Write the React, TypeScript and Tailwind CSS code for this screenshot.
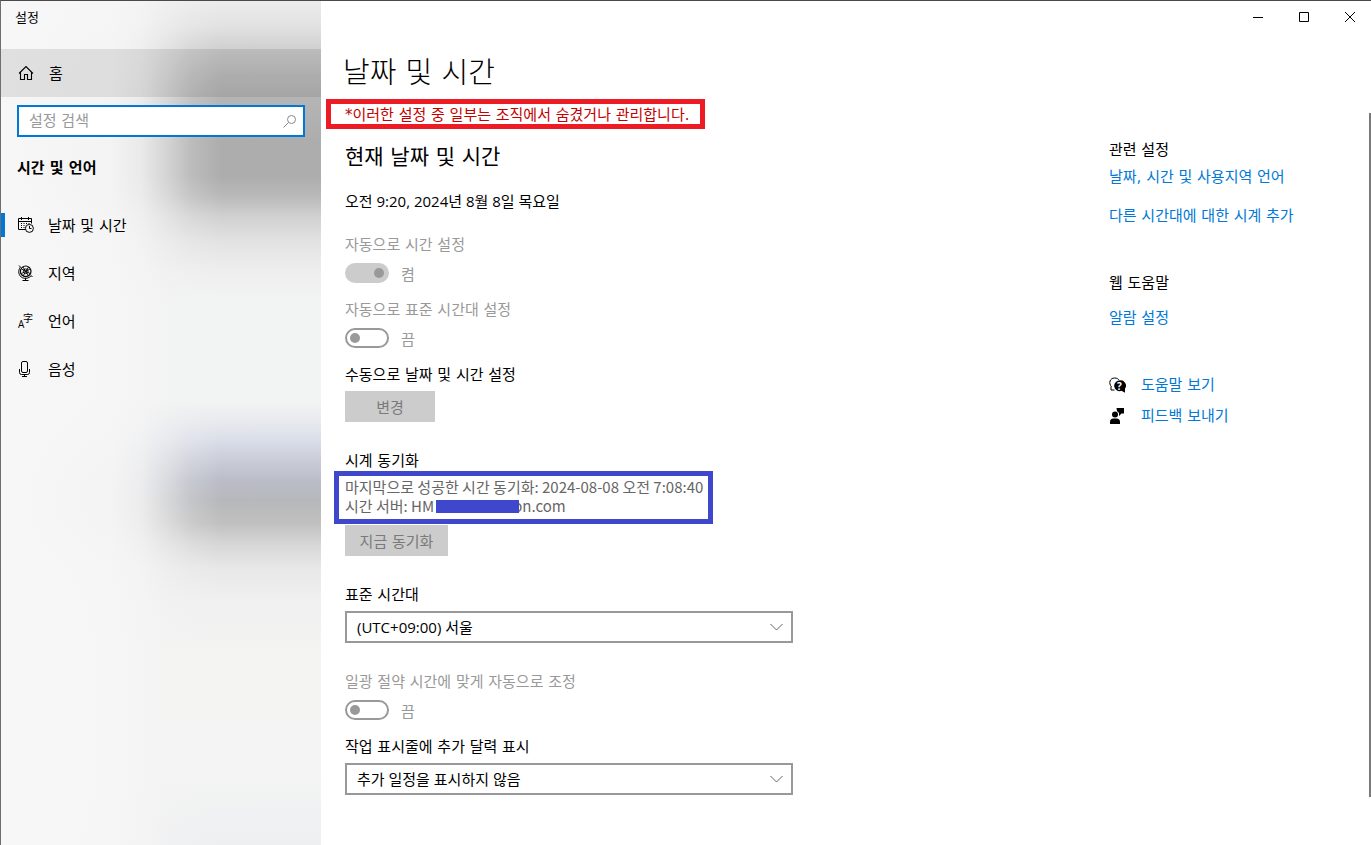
import type { ReactNode } from 'react'

const CalendarIcon = () => (
  <svg width="16" height="16" viewBox="0 0 16 16" fill="none" stroke="#000" aria-hidden="true">
    <path d="M7.5 12.5H.5v-11h13v5M.5 4.5h13M3.5 0v3M10.5 0v3" />
    <path d="M3 6.5h1M5.5 6.5h1M8 6.5h1M10.5 6.5h1M3 8.5h1M5.5 8.5h1M3 10.5h1M5.5 10.5h1" strokeWidth="1.2" />
    <circle cx="11.4" cy="11.4" r="4" />
    <path d="M11.5 8.8v2.7h2" />
  </svg>
)

const GlobeIcon = () => (
  <svg width="16" height="16" viewBox="0 0 16 16" fill="none" stroke="#000" aria-hidden="true">
    <circle cx="7.7" cy="6.3" r="5.3" strokeWidth="1.2" />
    <path d="M3.5 4L12 8.5M12 4L3.5 8.5M5 2l5.5 9M10.5 2L5 11" strokeWidth=".9" />
    <circle cx="7.7" cy="6.3" r="2.4" strokeWidth=".9" />
    <path d="M1 .5L2.5 2C-.5 5.500.5 11 4.5 12.800c3 1.200 6.500.5 8.500-2l1.500.7" />
    <path d="M7.5 13v2.500M4.500 15.500h6" />
  </svg>
)

const LanguageIcon = () => (
  <svg width="16" height="16" viewBox="0 0 16 16" className="overflow-visible" aria-hidden="true">
    <text x="0" y="15" fontSize="10" fontFamily="Open Sans, sans-serif">A</text>
    <text x="5" y="9" fontSize="10" fontFamily="Noto Sans CJK KR, sans-serif">字</text>
  </svg>
)

const MicIcon = () => (
  <svg width="16" height="16" viewBox="0 0 16 16" fill="none" stroke="#000" aria-hidden="true">
    <rect x="3.5" y=".5" width="6" height="11" rx="1.5" />
    <path d="M1.5 8v3.5q0 2 2 2h6q2 0 2-2V8M6.5 13.5v2M4 15.5h5" />
  </svg>
)

const HomeIcon = () => (
  <svg width="16" height="16" viewBox="0 0 16 16" fill="none" stroke="#000" strokeWidth="1.1" aria-hidden="true">
    <path d="M1 8.5l7-7 7 7M2.5 7.5v7h4v-5h3v5h4v-7" />
  </svg>
)

const SearchIcon = () => (
  <svg width="14" height="14" viewBox="0 0 14 14" fill="none" stroke="#888" aria-hidden="true">
    <circle cx="8.5" cy="5.5" r="4" />
    <path d="M5.5 8.5l-5 5" />
  </svg>
)

const HelpIcon = () => (
  <svg width="17" height="17" viewBox="0 0 17 17" aria-hidden="true">
    <path d="M2 10v3h3.5M2.500 10C-.8 6 1 1 5.500 1c2.500 0 4 1 4.800 2.500" fill="none" stroke="#000" />
    <path d="M10.5 3.500a5.300 5.300 0 1 0 2 10.200l3.500 2v-4a5.300 5.300 0 0 0-5.500-8.200z" />
    <text x="8" y="12.5" fontSize="10" fontWeight="700" fill="#fff" fontFamily="Open Sans, sans-serif">?</text>
  </svg>
)

const FeedbackIcon = () => (
  <svg width="17" height="17" viewBox="0 0 17 17" aria-hidden="true">
    <circle cx="6" cy="6.5" r="3" />
    <path d="M1 16v-2q0-3.500 3.500-3.500h3Q11 10.500 11 14v2zM7.500 0H15v5.500h-2.500L10 8V5L8 3z" />
  </svg>
)

const navItems = [
  { label: '날짜 및 시간', icon: CalendarIcon, active: true },
  { label: '지역', icon: GlobeIcon, active: false },
  { label: '언어', icon: LanguageIcon, active: false },
  { label: '음성', icon: MicIcon, active: false },
]

function Toggle({ id, label, on }: { id: string; label: string; on: boolean }) {
  return (
    <div className="mb-4 text-[#999]">
      <label htmlFor={id} className="mb-2 block pt-px">{label}</label>
      <div className="flex h-5 items-center gap-3">
        <input
          id={id}
          type="checkbox"
          role="switch"
          disabled
          defaultChecked={on}
          className="flex h-5 w-11 appearance-none items-center rounded-full border-2 border-[#999] px-[3px] before:size-2.5 before:rounded-full before:bg-[#999] checked:justify-end checked:border-[#ccc] checked:bg-[#ccc]"
        />
        <span className="pt-1">{on ? '켬' : '끔'}</span>
      </div>
    </div>
  )
}

function Dropdown({ id, label, value }: { id: string; label: string; value: string }) {
  return (
    <div>
      <label htmlFor={id} className="mb-1.5 block pt-px">{label}</label>
      <div className="relative w-full max-w-[448px]">
        <select
          id={id}
          className="block h-8 w-full appearance-none border-2 border-[#999] bg-white pl-2.5 font-['Open_Sans','Noto_Sans_CJK_KR',sans-serif]"
        >
          <option>{value}</option>
        </select>
        <svg className="pointer-events-none absolute top-3 right-2.5" width="13" height="8" viewBox="0 0 13 8" fill="none" stroke="#666">
          <path d="M.5 1l6 6 6-6" />
        </svg>
      </div>
    </div>
  )
}

function SideLink({ children }: { children: ReactNode }) {
  return <a href="#" className="block text-[#0078d7]">{children}</a>
}

export default function App() {
  return (
    <div className="relative flex min-h-screen border-t border-l border-t-[#4a484a] border-l-[#6e6e6e] bg-white font-['DejaVu_Sans','Noto_Sans_CJK_KR',sans-serif] text-[15px] leading-5 text-black">
      <aside className="w-80 shrink-0 bg-[linear-gradient(90deg,#f7f7f7_0,#f6f6f6f5_110px,#f5f5f5d8_140px,#f3f3f390_165px,#f3f3f338_190px,#f3f3f300_220px),linear-gradient(180deg,#ececec_0,#e2e2e2_25px,#cecece_50px,#bfbfbf_75px,#b5b5b5_97px,#adadad_140px,#adadad_175px,#b9b9b9_195px,#d0d0d0_215px,#e2e2e2_240px,#eeeeee_270px,#f2f3f3_300px,#f2f3f3_400px,#e8eaee_420px,#dbdfe9_438px,#cbced9_458px,#babdc7_480px,#b6b8bb_500px,#c0c0c0_522px,#d8d8d8_545px,#e8e8e8_568px,#f0f0f0_600px,#f4f4f3_660px,#f3f4f3_770px,#eeeff1_845px)]">
        <div className="flex h-12 items-start px-3.5 pt-[7px] text-[13px]">설정</div>
        <a href="#" className="flex h-12 items-center gap-[15px] bg-black/9 px-[17px]">
          <HomeIcon />
          <span className="pt-0.5">홈</span>
        </a>
        <div className="mx-4 mt-2 flex h-8 items-center border-2 border-[#0078d7] bg-white pr-1.5">
          <input
            type="text"
            aria-label="설정 검색"
            placeholder="설정 검색"
            className="h-full min-w-0 flex-1 px-2.5 outline-none placeholder:text-[#999]"
          />
          <SearchIcon />
        </div>
        <h2 className="mt-[21px] px-4 font-bold">시간 및 언어</h2>
        <nav className="mt-[23px]">
          {navItems.map((item) => (
            <a key={item.label} href="#" className="flex h-12 items-center">
              <span className={item.active ? 'h-6 w-1 bg-[#0078d7]' : 'h-6 w-1'} />
              <span className="mr-3.5 ml-[13px]">
                <item.icon />
              </span>
              <span className="pt-0.5">{item.label}</span>
            </a>
          ))}
        </nav>
      </aside>

      <div className="flex min-w-0 flex-1 flex-col">
        <header className="flex h-8 justify-end gap-1.5 pr-px">
          <button type="button" aria-label="최소화" className="flex w-10 items-center justify-center">
            <svg width="10" height="10" viewBox="0 0 10 10" stroke="#000"><path d="M0 5.5h10" /></svg>
          </button>
          <button type="button" aria-label="최대화" className="flex w-10 items-center justify-center">
            <svg width="10" height="10" viewBox="0 0 10 10" fill="none" stroke="#000"><path d="M.5.5h9v9h-9z" /></svg>
          </button>
          <button type="button" aria-label="닫기" className="flex w-10 items-center justify-center">
            <svg width="10" height="10" viewBox="0 0 10 10" stroke="#000"><path d="M0 0l10 10M10 0L0 10" /></svg>
          </button>
        </header>

        <div className="flex flex-1 pl-6">
          <main className="min-w-0 flex-1 pt-5 pb-12">
            <h1 className="-ml-0.5 text-[29px] leading-10 font-light">날짜 및 시간</h1>
            <p className="mt-1.5 -ml-[19px] h-[30px] w-[379px] border-5 border-[#ed1c24] pt-px pl-3.5 text-[#c50000]">
              *이러한 설정 중 일부는 조직에서 숨겼거나 관리합니다.
            </p>

            <h2 className="mt-3.5 text-[21px] leading-7">현재 날짜 및 시간</h2>
            <p className="mt-5 mb-[23px] font-['Open_Sans','Noto_Sans_CJK_KR',sans-serif]">오전 9:20, 2024년 8월 8일 목요일</p>

            <Toggle id="auto-time" label="자동으로 시간 설정" on={true} />
            <Toggle id="auto-zone" label="자동으로 표준 시간대 설정" on={false} />

            <h3 className="pt-px">수동으로 날짜 및 시간 설정</h3>
            <button type="button" disabled className="mt-1.5 block h-[31px] w-[90px] bg-[#ccc] pt-0.5 text-[#7a7a7a]">변경</button>

            <h3 className="mt-7 pt-px">시계 동기화</h3>
            <div className="-ml-[11px] h-[53px] w-[379px] border-5 border-[#3f48cc] pt-px pl-1.5 font-['Noto_Sans_CJK_KR',sans-serif] leading-[19px] whitespace-nowrap text-[#666]">
              <p>마지막으로 성공한 시간 동기화: 2024-08-08 오전 7:08:40</p>
              <p className="flex items-center">
                시간 서버: HM
                <span className="relative mt-0.5 -mr-1.5 ml-0.5 h-[13px] w-[83px] bg-[#3f48cc]" />
                on.com
              </p>
            </div>
            <button type="button" disabled className="mt-px block h-[31px] w-[103px] bg-[#ccc] pt-0.5 text-[#7a7a7a]">지금 동기화</button>

            <div className="mt-7 mb-7">
              <Dropdown id="zone" label="표준 시간대" value="(UTC+09:00) 서울" />
            </div>
            <Toggle id="dst" label="일광 절약 시간에 맞게 자동으로 조정" on={false} />
            <Dropdown id="calendar" label="작업 표시줄에 추가 달력 표시" value="추가 일정을 표시하지 않음" />
          </main>

          <aside className="w-[262px] shrink-0 pt-[107px]">
            <h3 className="mb-[7px]">관련 설정</h3>
            <SideLink>날짜, 시간 및 사용지역 언어</SideLink>
            <div className="mt-[19px]">
              <SideLink>다른 시간대에 대한 시계 추가</SideLink>
            </div>
            <h3 className="mt-[47px] mb-[15px]">웹 도움말</h3>
            <SideLink>알람 설정</SideLink>
            <div className="mt-[47px] flex flex-col gap-[11px]">
              <div className="flex items-center gap-[15px]">
                <HelpIcon />
                <SideLink>도움말 보기</SideLink>
              </div>
              <div className="flex items-center gap-[15px]">
                <FeedbackIcon />
                <SideLink>피드백 보내기</SideLink>
              </div>
            </div>
          </aside>
        </div>
      </div>

      <div className="absolute top-28 right-0 bottom-12 w-0.5 bg-[#7a7a7a]" />
    </div>
  )
}
